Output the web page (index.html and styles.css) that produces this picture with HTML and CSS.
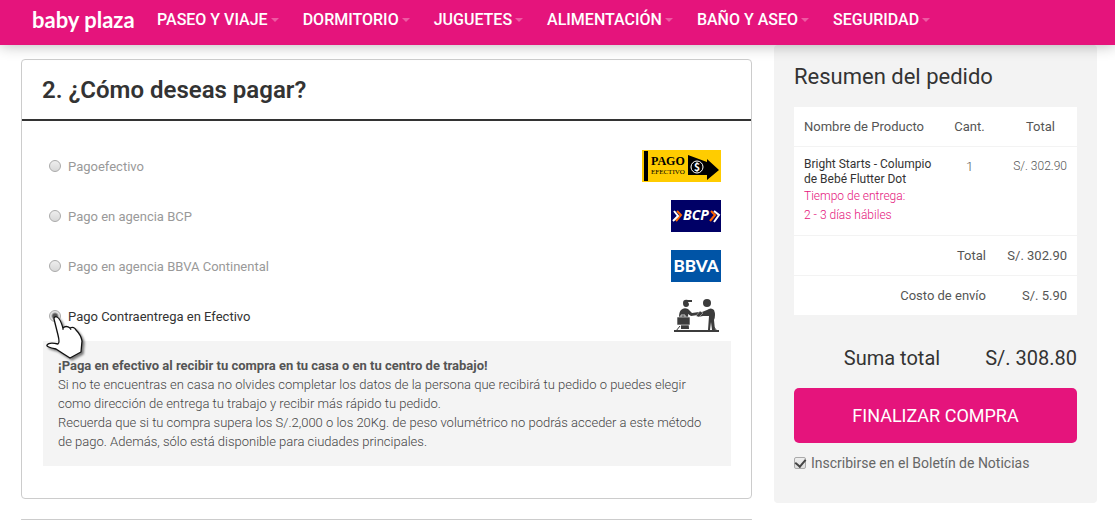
FILE: index.html
```html
<!DOCTYPE html>
<html lang="es">
<head>
    <meta charset="UTF-8">
    <meta name="viewport" content="width=device-width, initial-scale=1.0">
    <title>Baby Plaza - Finalizar compra</title>
    <link rel="stylesheet" href="styles.css">
</head>
<body>
    <header class="header">
        <a href="#" class="logo">baby plaza</a>
        <nav class="nav">
            <a href="#" class="nav-link">PASEO Y VIAJE</a>
            <a href="#" class="nav-link">DORMITORIO</a>
            <a href="#" class="nav-link">JUGUETES</a>
            <a href="#" class="nav-link">ALIMENTACIÓN</a>
            <a href="#" class="nav-link">BAÑO Y ASEO</a>
            <a href="#" class="nav-link">SEGURIDAD</a>
        </nav>
    </header>

    <form class="checkout">
        <main class="steps">
            <section class="step">
                <h2 class="step-title">2. ¿Cómo deseas pagar?</h2>
                <div class="step-body">
                    <div class="option">
                        <input type="radio" name="payment" id="pagoefectivo" class="radio">
                        <label for="pagoefectivo">Pagoefectivo</label>
                        <svg class="option-logo" width="79" height="32" viewBox="0 0 79 32">
                            <rect width="79" height="32" fill="#fc0"/>
                            <rect x="2" y="1" width="4" height="30"/>
                            <text x="9" y="15" class="pago-text" font-size="12" font-weight="bold">PAGO</text>
                            <text x="9" y="24" class="pago-text" font-size="7">EFECTIVO</text>
                            <path d="M46 5 65 12V9L77 20 65 30V25H46z"/>
                            <circle cx="55" cy="17" r="6" fill="none" stroke="#fff" stroke-width="1"/>
                            <text x="55" y="21" fill="#fff" text-anchor="middle" class="sans-text" font-size="10">S</text>
                            <path d="M55 12v2M55 20v2" stroke="#fff"/>
                        </svg>
                    </div>
                    <div class="option">
                        <input type="radio" name="payment" id="bcp" class="radio">
                        <label for="bcp">Pago en agencia BCP</label>
                        <svg class="option-logo" width="50" height="32" viewBox="0 0 50 32">
                            <rect width="50" height="32" fill="#006"/>
                            <g fill="none" stroke-width="2">
                                <path d="M6 11 10 15 5 21M40 11 44 15 39 21" stroke="#f60"/>
                                <path d="M3 11 7 16 2 21M43 11 48 15 43 22" stroke="#fff"/>
                            </g>
                            <text x="25" y="20" fill="#fff" text-anchor="middle" class="sans-text bcp-text" font-size="14">BCP</text>
                        </svg>
                    </div>
                    <div class="option">
                        <input type="radio" name="payment" id="bbva" class="radio">
                        <label for="bbva">Pago en agencia BBVA Continental</label>
                        <svg class="option-logo" width="50" height="32" viewBox="0 0 50 32">
                            <rect width="50" height="32" fill="#0054a6"/>
                            <text x="25" y="22" fill="#fff" text-anchor="middle" class="bbva-text" font-size="17">BBVA</text>
                        </svg>
                    </div>
                    <div class="option selected">
                        <input type="radio" name="payment" id="contraentrega" class="radio" checked>
                        <label for="contraentrega">Pago Contraentrega en Efectivo</label>
                        <svg class="option-logo delivery" width="45" height="34" viewBox="0 0 45 34" fill="#3c3c3c">
                            <path d="M9 4Q9 0 14 1L18 1 18 3H14L15 5Q15 8 12 8 9 8 9 4z"/>
                            <path d="M7 11Q10 8 14 10L18 14 25 13 24 16 17 17 14 15 15 30H7V18H5Q5 13 7 11z"/>
                            <path d="M3 18H16V26H3z" stroke="#fff" stroke-width=".6"/>
                            <path d="M7 18v-2h4v2" fill="none" stroke="#ccc"/>
                            <circle cx="33" cy="4" r="4"/>
                            <path d="M33 11Q37 8 40 11 42 16 40 21L41 31H38L37 23 36 31H34L35 17 29 17 24 18 22 15 28 13z"/>
                            <path d="M22 17 26 12 29 14 25 18z" stroke="#fff" stroke-width=".4"/>
                            <path d="M6 27 2 32H43L39 27" fill="none" stroke="#3c3c3c" stroke-width="1"/>
                            <rect x="0" y="31" width="45" height="2"/>
                        </svg>
                        <svg class="pointer" width="44" height="54" viewBox="0 0 44 54">
                            <path d="M9 9Q9 6 12 7 15 8 18 18 21 15 25 18 29 16 31 20 36 25 37 31L36 42 25 48Q17 43 11 39 1 37 2 35 4 32 13 34Q15 33 13 25 11 17 9 9z" fill="#fff" stroke="#111" stroke-linejoin="round" stroke-width="1.3"/>
                            <path d="M18 17v3M25 18l1 2" stroke="#111"/>
                        </svg>
                    </div>
                    <div class="info">
                        <strong>¡Paga en efectivo al recibir tu compra en tu casa o en tu centro de trabajo!</strong>
                        <p>Si no te encuentras en casa no olvides completar los datos de la persona que recibirá tu pedido o puedes elegir como dirección de entrega tu trabajo y recibir más rápido tu pedido.</p>
                        <p>Recuerda que si tu compra supera los S/.2,000 o los 20Kg. de peso volumétrico no podrás acceder a este método de pago. Además, sólo está disponible para ciudades principales.</p>
                    </div>
                </div>
            </section>
            <section class="step next-step"></section>
        </main>

        <aside class="summary">
            <h3 class="summary-title">Resumen del pedido</h3>
            <table class="order">
                <thead>
                    <tr>
                        <th class="name">Nombre de Producto</th>
                        <th class="qty">Cant.</th>
                        <th class="price">Total</th>
                    </tr>
                </thead>
                <tbody>
                    <tr class="product">
                        <td class="name">
                            <div class="product-name">Bright Starts - Columpio de Bebé Flutter Dot</div>
                            <div class="delivery-time">Tiempo de entrega:<br>2 - 3 días hábiles</div>
                        </td>
                        <td class="qty">1</td>
                        <td class="price">S/. 302.90</td>
                    </tr>
                </tbody>
                <tfoot>
                    <tr>
                        <td colspan="2">Total</td>
                        <td class="price">S/. 302.90</td>
                    </tr>
                    <tr>
                        <td colspan="2">Costo de envío</td>
                        <td class="price">S/. 5.90</td>
                    </tr>
                </tfoot>
            </table>
            <div class="grand-total">
                <span>Suma total</span>
                <span>S/. 308.80</span>
            </div>
            <button type="submit" class="btn-buy">FINALIZAR COMPRA</button>
            <div class="newsletter">
                <input type="checkbox" id="newsletter" class="checkbox" checked>
                <label for="newsletter">Inscribirse en el Boletín de Noticias</label>
            </div>
        </aside>
    </form>
</body>
</html>
```

FILE: styles.css
```css
* { box-sizing: border-box; }
body {
    margin: 0;
    font-family: Roboto, Arial, sans-serif;
    font-size: 13px;
    color: #555;
    background: #fff;
}

/* header */
.header {
    position: relative;
    z-index: 2;
    display: flex;
    align-items: center;
    height: 45px;
    padding: 0 32px 6px;
    background: #e5147c;
    box-shadow: 0 0 15px rgba(0, 0, 0, 0.3);
}
.logo {
    width: 125px;
    font-family: Lato, sans-serif;
    font-size: 22px;
    font-weight: bold;
    color: #fff;
    text-decoration: none;
}
.nav { display: flex; gap: 24px; }
.nav-link {
    display: flex;
    align-items: center;
    gap: 3px;
    font-size: 16px;
    font-weight: 500;
    color: #fff;
    text-decoration: none;
    white-space: nowrap;
}
.nav-link::after {
    content: "";
    border: 4px solid transparent;
    border-top-color: #ee5aa3;
    border-bottom: 0;
}

/* layout */
.checkout {
    display: flex;
    align-items: flex-start;
    gap: 22px;
    padding: 0 18px 0 21px;
}
.steps { flex: 1; padding-top: 14px; }
.step {
    margin-bottom: 20px;
    padding-bottom: 32px;
    border: 1px solid #ccc;
    border-radius: 4px;
}
.next-step {
    margin-bottom: 0;
    padding-bottom: 0;
    border-bottom: none;
    border-radius: 4px 4px 0 0;
}
.step-title {
    margin: 0;
    padding: 15px 20px 13px;
    font-size: 24px;
    font-weight: 600;
    line-height: 31px;
    color: #333;
    border-bottom: 2px solid #333;
}
.step-body { padding: 20px 20px 0 21px; }

/* payment options */
.option {
    position: relative;
    display: flex;
    align-items: center;
    gap: 7px;
    height: 50px;
    padding: 0 10px 0 6px;
    color: #999;
}
.option.selected { color: #333; }
.option-logo { margin-left: auto; }
.delivery { margin-right: 2px; }
.radio {
    appearance: none;
    width: 12px;
    height: 12px;
    margin: 0;
    border: 1px solid #aaa;
    border-radius: 50%;
    background: linear-gradient(#eee, #d8d8d8);
}
.radio:checked { background: radial-gradient(circle, #555 2px, #e2e2e2 4px); }
.pago-text { font-family: "Liberation Serif", serif; }
.sans-text { font-family: "Open Sans", sans-serif; font-weight: bold; }
.bcp-text { font-style: italic; }
.bbva-text { font-family: Lato, sans-serif; font-weight: 900; }
.pointer {
    position: absolute;
    left: 2px;
    top: 19px;
    filter: drop-shadow(2px 2px 1px rgba(0, 0, 0, 0.5));
}
.info {
    padding: 15px;
    line-height: 19px;
    font-weight: 300;
    color: #444;
    background: #f4f4f4;
}
.info strong { font-weight: 700; color: #555; }
.info p { margin: 0; }

/* order summary */
.summary {
    flex: 0 0 323px;
    padding: 16px 20px 30px;
    background: #f3f3f3;
    border-radius: 4px;
}
.summary-title {
    margin: 0 0 15px;
    font-size: 22px;
    font-weight: 400;
    line-height: 31px;
    color: #333;
}
.order {
    width: 100%;
    table-layout: fixed;
    border-collapse: collapse;
    background: #fff;
}
.order th, .order td {
    padding: 10px;
    font-weight: 400;
    line-height: 19px;
    text-align: right;
    vertical-align: top;
}
.order tr + tr, .order tbody tr, .order tfoot tr { border-top: 1px solid #f3f3f3; }
.order .name { text-align: left; }
.order .qty { width: 53px; padding-left: 0; padding-right: 0; text-align: center; }
.order .price { width: 81px; padding-left: 0; white-space: nowrap; }
.order th.price { padding-left: 18px; text-align: center; }
.order .product td { font-weight: 300; }
.order .product .price { font-size: 12px; }
.product-name {
    font-size: 12px;
    font-weight: 400;
    line-height: 15px;
    color: #333;
}
.delivery-time { font-size: 12px; color: #e5147c; }
.grand-total {
    display: flex;
    justify-content: flex-end;
    gap: 45px;
    padding: 30px 0 17px;
    font-size: 20px;
    line-height: 26px;
    color: #333;
}
.btn-buy {
    width: 100%;
    height: 55px;
    border: none;
    border-radius: 5px;
    background: #e5147c;
    color: #fff;
    font-family: inherit;
    font-size: 18px;
    cursor: pointer;
}
.newsletter {
    display: flex;
    align-items: center;
    gap: 5px;
    padding-top: 10px;
    font-size: 14px;
    line-height: 20px;
    color: #666;
}
.checkbox {
    display: flex;
    align-items: center;
    justify-content: center;
    appearance: none;
    width: 12px;
    height: 12px;
    margin: 0;
    border: 1px solid #aaa;
    border-radius: 2px;
    background: linear-gradient(#eee, #ddd);
}
.checkbox:checked::before {
    content: "";
    width: 5px;
    height: 8px;
    margin-bottom: 2px;
    border: solid #444;
    border-width: 0 2px 2px 0;
    transform: rotate(40deg);
}
```
